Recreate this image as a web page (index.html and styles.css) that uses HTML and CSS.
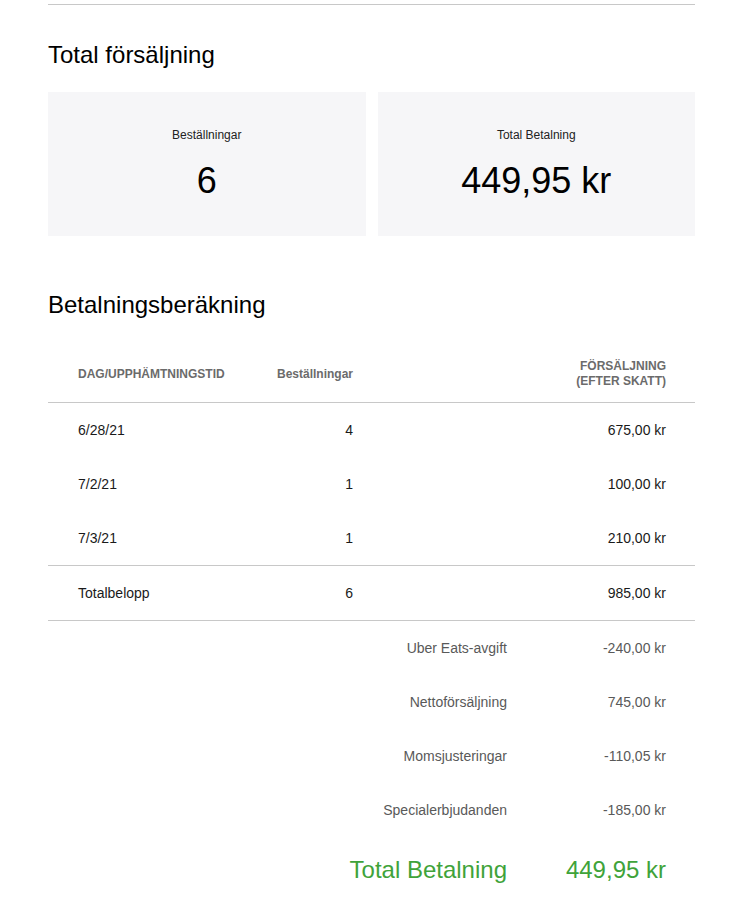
FILE: index.html
```html
<!DOCTYPE html>
<html lang="sv">
<head>
<meta charset="utf-8">
<title>Total försäljning</title>
<link rel="stylesheet" href="styles.css">
</head>
<body>
<main class="page">
  <hr class="rule">
  <h2 class="section-title first">Total försäljning</h2>
  <div class="cards">
    <div class="card">
      <div class="card-label">Beställningar</div>
      <div class="card-value">6</div>
    </div>
    <div class="card">
      <div class="card-label">Total Betalning</div>
      <div class="card-value">449,95 kr</div>
    </div>
  </div>

  <h2 class="section-title second">Betalningsberäkning</h2>
  <div class="table">
    <div class="row head">
      <div class="c1">DAG/UPPHÄMTNINGSTID</div>
      <div class="c2">Beställningar</div>
      <div class="c3">FÖRSÄLJNING<br>(EFTER SKATT)</div>
    </div>
    <div class="row data">
      <div class="c1">6/28/21</div>
      <div class="c2">4</div>
      <div class="c3">675,00 kr</div>
    </div>
    <div class="row data">
      <div class="c1">7/2/21</div>
      <div class="c2">1</div>
      <div class="c3">100,00 kr</div>
    </div>
    <div class="row data last">
      <div class="c1">7/3/21</div>
      <div class="c2">1</div>
      <div class="c3">210,00 kr</div>
    </div>
    <div class="row data total">
      <div class="c1">Totalbelopp</div>
      <div class="c2">6</div>
      <div class="c3">985,00 kr</div>
    </div>
  </div>

  <div class="summary">
    <div class="srow"><div class="slabel">Uber Eats-avgift</div><div class="svalue">-240,00 kr</div></div>
    <div class="srow"><div class="slabel">Nettoförsäljning</div><div class="svalue">745,00 kr</div></div>
    <div class="srow"><div class="slabel">Momsjusteringar</div><div class="svalue">-110,05 kr</div></div>
    <div class="srow"><div class="slabel">Specialerbjudanden</div><div class="svalue">-185,00 kr</div></div>
    <div class="srow grand"><div class="slabel">Total Betalning</div><div class="svalue">449,95 kr</div></div>
  </div>
</main>
</body>
</html>
```

FILE: styles.css
```css
html, body {
  margin: 0;
  padding: 0;
  background: #ffffff;
}

body {
  font-family: "Liberation Sans", Arial, sans-serif;
  color: #1a1a1a;
}

.page {
  width: 647px;
  margin-left: 48px;
  padding-top: 4px;
}

.rule {
  margin: 0;
  border: 0;
  border-top: 1px solid #c8c8c8;
  height: 0;
}

.section-title {
  margin: 0;
  font-size: 24px;
  line-height: 28px;
  font-weight: normal;
  color: #000000;
}

.section-title.first {
  margin-top: 36px;
}

.section-title.second {
  margin-top: 55px;
}

.cards {
  margin-top: 23px;
  display: grid;
  grid-template-columns: 1fr 1fr;
  gap: 12px;
}

.card {
  background: #f6f6f8;
  height: 144px;
  box-sizing: border-box;
  padding-top: 35px;
  text-align: center;
}

.card-label {
  font-size: 12px;
  line-height: 16px;
  color: #222222;
}

.card-value {
  margin-top: 18px;
  font-size: 36px;
  line-height: 40px;
  color: #000000;
}

.table {
  margin-top: 23px;
}

.row {
  display: grid;
  grid-template-columns: 175px 100px 1fr;
  padding: 0 29px 0 30px;
  align-items: center;
  border-bottom: 1px solid #c8c8c8;
}

.row .c2,
.row .c3 {
  text-align: right;
}

.row.head {
  padding-top: 17px;
  padding-bottom: 13px;
  font-size: 12px;
  line-height: 15px;
  font-weight: bold;
  color: #6b6b6b;
}

.row.data {
  height: 54px;
  box-sizing: border-box;
  border-bottom: none;
  font-size: 14px;
  line-height: 18px;
  color: #1a1a1a;
}

.row.data.last {
  border-bottom: 1px solid #c8c8c8;
  height: 55px;
}

.row.data.total {
  border-bottom: 1px solid #c8c8c8;
  height: 55px;
}

.summary {
  display: flex;
  flex-direction: column;
}

.srow {
  display: grid;
  grid-template-columns: 1fr 159px;
  padding: 0 29px 0 30px;
  height: 54px;
  align-items: center;
  font-size: 14px;
  line-height: 18px;
  color: #595959;
}

.slabel,
.svalue {
  text-align: right;
}

.srow.grand {
  height: 66px;
  font-size: 24px;
  line-height: 28px;
  color: #3fa33a;
}
```
